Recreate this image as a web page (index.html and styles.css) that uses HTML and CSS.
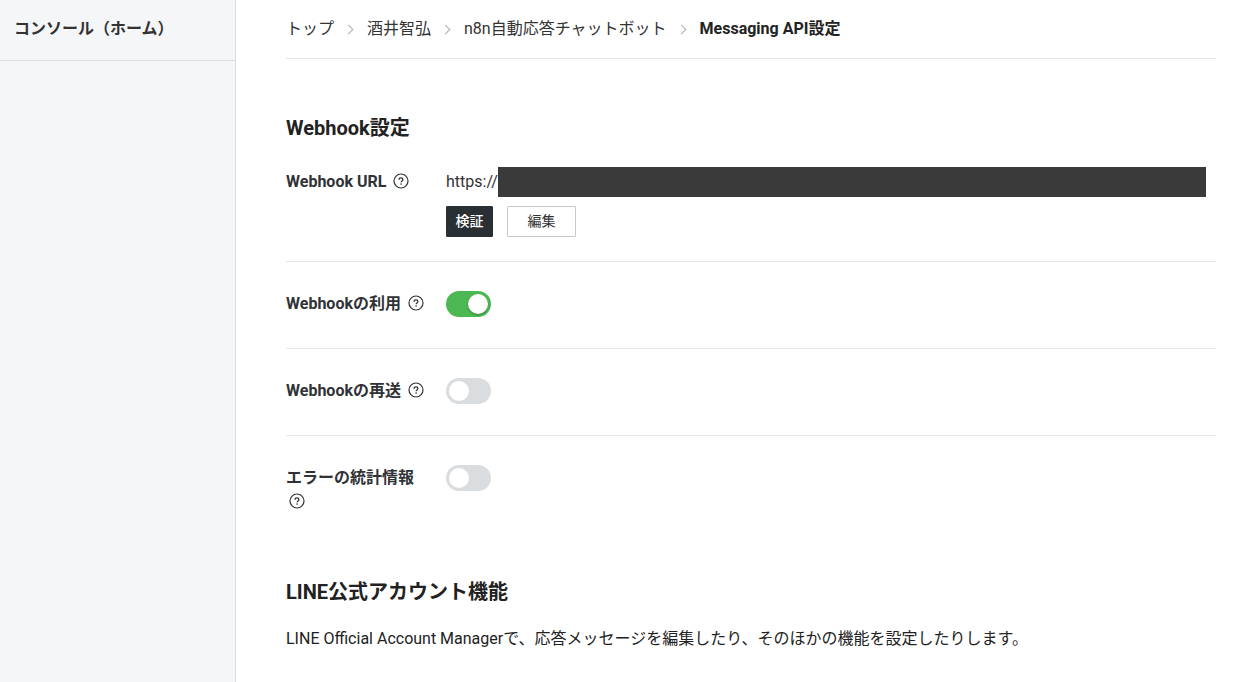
FILE: index.html
```html
<!DOCTYPE html>
<html lang="ja">
  <head>
    <meta charset="utf-8">
    <title>Messaging API設定</title>
    <link rel="stylesheet" href="styles.css">
  </head>
  <body>
    <svg class="sprite" aria-hidden="true">
      <symbol id="icon-help" viewBox="0 0 16 16">
        <circle cx="8" cy="8" r="7" fill="none" stroke="currentColor" stroke-width="1.2"/>
        <path d="M6.1 6.7C6.1 5.5 6.9 4.8 8 4.8s1.9.7 1.9 1.7c0 1.4-1.8 1.4-1.8 2.8" fill="none" stroke="currentColor" stroke-width="1.3"/>
        <circle cx="8.1" cy="11.1" r=".8" fill="currentColor"/>
      </symbol>
    </svg>

    <aside class="sidebar">
      <a class="sidebar-home" href="#">コンソール（ホーム）</a>
    </aside>

    <main class="content">
      <nav>
        <ol class="breadcrumb">
          <li><a href="#">トップ</a></li>
          <li><a href="#">酒井智弘</a></li>
          <li><a href="#">n8n自動応答チャットボット</a></li>
          <li class="current">Messaging API設定</li>
        </ol>
      </nav>

      <section class="webhook">
        <h2>Webhook設定</h2>
        <div class="row row-url">
          <div class="label">Webhook URL <svg class="help"><use href="#icon-help"/></svg></div>
          <div class="value">
            <div class="url">https://<span class="mask"></span></div>
            <div class="buttons">
              <button type="button" class="btn btn-dark">検証</button>
              <button type="button" class="btn">編集</button>
            </div>
          </div>
        </div>
        <div class="row">
          <label class="label" for="use-webhook">Webhookの利用 <svg class="help"><use href="#icon-help"/></svg></label>
          <input type="checkbox" class="switch" id="use-webhook" checked>
        </div>
        <div class="row">
          <label class="label" for="redelivery">Webhookの再送 <svg class="help"><use href="#icon-help"/></svg></label>
          <input type="checkbox" class="switch" id="redelivery">
        </div>
        <div class="row">
          <label class="label" for="error-stats">エラーの統計情報 <svg class="help"><use href="#icon-help"/></svg></label>
          <input type="checkbox" class="switch" id="error-stats">
        </div>
      </section>

      <section class="features">
        <h2>LINE公式アカウント機能</h2>
        <p>LINE Official Account Managerで、応答メッセージを編集したり、そのほかの機能を設定したりします。</p>
      </section>
    </main>
  </body>
</html>
```

FILE: styles.css
```css
* {
  box-sizing: border-box;
}

body {
  display: flex;
  min-height: 100vh;
  margin: 0;
  color: #222;
  background: #fff;
  font-family: Roboto, "Noto Sans CJK JP", sans-serif;
  font-size: 16px;
  line-height: 24px;
}

a {
  color: inherit;
  text-decoration: none;
}

.sprite {
  position: absolute;
  width: 0;
  height: 0;
}

.sidebar {
  flex: 0 0 236px;
  background: #f5f6f8;
  border-right: 1px solid #dcdce6;
}

.sidebar-home {
  display: block;
  padding: 17px 14px 19px;
  border-bottom: 1px solid #dcdce6;
  color: #333;
  font-weight: 700;
}

.content {
  flex: 1;
  min-width: 0;
  padding: 0 33px 32px 50px;
}

.breadcrumb {
  display: flex;
  margin: 0;
  padding: 17px 0;
  border-bottom: 1px solid #e6e6e8;
  color: #333;
  list-style: none;
}

.breadcrumb li {
  display: flex;
  align-items: center;
}

.breadcrumb li + li::before {
  content: "";
  width: 6px;
  height: 6px;
  margin: 0 15px 0 11px;
  border: solid #a8b0b6;
  border-width: 1px 1px 0 0;
  transform: rotate(45deg);
}

.breadcrumb .current {
  color: #222;
  font-weight: 700;
}

h2 {
  margin: 0;
  font-size: 20px;
  line-height: 30px;
  font-weight: 700;
}

.webhook {
  padding-top: 54px;
}

.row {
  display: flex;
  align-items: flex-start;
  padding: 29px 0 31px;
  border-bottom: 1px solid #e8e8ea;
}

.row:last-child {
  padding-bottom: 0;
  border-bottom: 0;
}

.row-url {
  padding: 24px 0;
}

.label {
  flex: 0 0 140px;
  margin-right: 20px;
  padding-top: 1px;
  color: #303236;
  font-weight: 700;
}

.row-url .label {
  padding-top: 3px;
}

.help {
  width: 16px;
  height: 16px;
  margin-left: 3px;
  vertical-align: -2px;
}

.value {
  flex: 1;
  color: #333;
}

.url {
  display: flex;
  align-items: center;
  height: 30px;
}

.mask {
  flex: 1;
  height: 30px;
  margin-right: 10px;
  background: #3a3a3a;
}

.buttons {
  display: flex;
  gap: 14px;
  margin-top: 9px;
}

.btn {
  width: 69px;
  height: 31px;
  padding: 0 0 2px;
  border: 1px solid #c6cace;
  border-radius: 1px;
  color: #333;
  background: #fff;
  font: inherit;
  font-size: 14px;
}

.btn-dark {
  width: 47px;
  border-color: #2a2f34;
  color: #fff;
  background: #2a2f34;
  font-weight: 500;
}

.switch {
  appearance: none;
  width: 45px;
  height: 26px;
  margin: 0;
  padding: 3px;
  border-radius: 13px;
  background: #d9dde0;
}

.switch::before {
  content: "";
  display: block;
  width: 20px;
  height: 20px;
  border-radius: 50%;
  background: #fff;
}

.switch:checked {
  background: #4bb851;
}

.switch:checked::before {
  margin-left: auto;
  box-shadow: 0 1px 2px rgba(0, 0, 0, 0.3);
}

.features {
  padding-top: 63px;
}

.features p {
  margin: 20px 0 0;
}
```
